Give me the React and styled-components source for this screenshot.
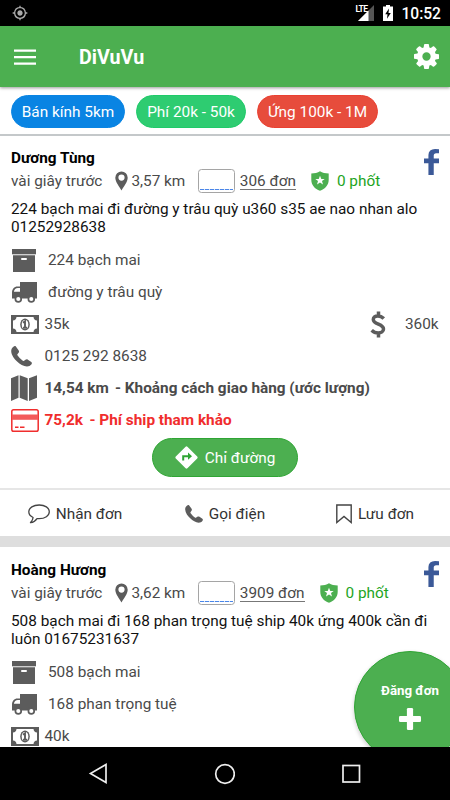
import React from 'react';
import styled, { createGlobalStyle, css } from 'styled-components';
import { MdGpsFixed } from 'react-icons/md';

const colors = {
  green: '#4caf50',
  edge: '#2fa534',
  grey: '#5c5c5c',
  text: '#4a4a4a',
  red: '#f02d2d',
};

const GlobalStyle = createGlobalStyle`
  * {
    box-sizing: border-box;
  }

  body {
    margin: 0;
    background: #fff;
    font-family: Roboto, 'Noto Sans', sans-serif;
    font-size: 15.35px;
    color: #111;
  }
`;

const Screen = styled.div`
  position: relative;
  display: flex;
  flex-direction: column;
  width: 450px;
  height: 800px;
  overflow: hidden;
  background: #fff;
`;

const StatusBar = styled.div`
  display: flex;
  align-items: center;
  flex: none;
  height: 26px;
  padding: 0 9px 0 12px;
  background: #000;
  color: #fff;
`;

const Clock = styled.span`
  margin-left: 8px;
  padding-top: 2px;
  font-size: 15.6px;
  font-weight: 500;
`;

const Spacer = styled.div`
  flex: 1;
`;

const Toolbar = styled.header`
  display: flex;
  align-items: center;
  flex: none;
  height: 61px;
  padding: 0 11px 0 14px;
  background: ${colors.green};
  box-shadow: 0 1px 3px rgba(0, 0, 0, 0.4);
  z-index: 1;
`;

const Title = styled.h1`
  margin: 2px 0 0 43px;
  font-size: 19.7px;
  font-weight: 700;
  color: #fff;
  flex: 1;
`;

const Filters = styled.div`
  display: flex;
  flex: none;
  gap: 11px;
  height: 49px;
  padding: 8px 11px 0;
  border-bottom: 2px solid #c4c8ca;
`;

const Chip = styled.span`
  display: flex;
  align-items: center;
  justify-content: center;
  width: ${({ w }) => `${w}px`};
  height: 32.5px;
  padding-top: 1px;
  border-radius: 17px;
  border: 1px solid ${({ edge }) => edge};
  background: ${({ bg }) => bg};
  color: #fff;
`;

const Feed = styled.main`
  flex: 1;
  min-height: 0;
  overflow: hidden;
`;

const Card = styled.article`
  padding-top: 11px;

  & + & {
    padding-top: 12px;
    border-top: 11px solid #dedede;
  }
`;

const CardBody = styled.div`
  padding: 0 11px;
`;

const CardHead = styled.div`
  display: flex;
  justify-content: space-between;

  > svg {
    margin-top: 2px;
  }
`;

const Name = styled.div`
  height: 22px;
  line-height: 22px;
  font-weight: 700;
  color: #000;
`;

const Meta = styled.div`
  display: flex;
  align-items: center;
  height: 23px;
  color: ${colors.text};
`;

const Distance = styled.span`
  display: flex;
  align-items: center;
  gap: 3px;
  margin: 0 13px;
`;

const Badge = styled.span`
  display: flex;
  align-items: flex-end;
  width: 37px;
  height: 24px;
  padding: 0 1px 2px;
  border: 1px solid #a5a5a5;
  border-radius: 3.5px;

  &::after {
    content: '';
    flex: 1;
    height: 1px;
    background: repeating-linear-gradient(90deg, #4a86e8 0 4px, #d5e3fa 4px 5px);
  }
`;

const Orders = styled.span`
  margin: 1px 15px 0 4.5px;
  line-height: 16px;
  border-bottom: 1px solid #777;
`;

const Reports = styled.span`
  margin-left: 8px;
  color: #1ea51e;
`;

const Description = styled.p`
  margin: 8px 0;
  line-height: 18px;
  color: #111;
`;

const Row = styled.div`
  display: flex;
  align-items: center;
  height: 32px;
  color: ${colors.text};

  ${({ strong }) =>
    strong &&
    css`
      font-weight: 700;
    `}

  ${({ red }) =>
    red &&
    css`
      color: ${colors.red};
    `}
`;

const IconSlot = styled.span`
  display: flex;
  align-items: center;
  width: ${({ wide }) => (wide ? '37px' : '33.5px')};
`;

const Lead = styled.span`
  width: ${({ w }) => `${w}px`};
`;

const Price = styled.span`
  width: 34px;
  margin-left: 19px;
`;

const RouteButton = styled.button`
  display: flex;
  align-items: center;
  justify-content: center;
  gap: 7px;
  width: 146px;
  height: 39px;
  margin: 2px auto 11px;
  padding: 0;
  border: 1px solid ${colors.edge};
  border-radius: 20px;
  background: ${colors.green};
  color: #fff;
  font: inherit;
`;

const Actions = styled.div`
  display: flex;
  height: 48px;
  border-top: 2px solid #e6e6e6;
`;

const Action = styled.div`
  display: flex;
  flex: 1;
  align-items: center;
  justify-content: center;
  gap: 6px;
  padding-top: 1px;
  color: #333;
`;

const PostButton = styled.div`
  position: absolute;
  left: 354px;
  top: 651px;
  display: flex;
  flex-direction: column;
  align-items: center;
  width: 112px;
  height: 112px;
  padding-top: 31px;
  border: 1px solid ${colors.edge};
  border-radius: 50%;
  background: ${colors.green};
  box-shadow: 0 2px 4px rgba(0, 0, 0, 0.2);
  color: #fff;
  font-size: 13.3px;
  font-weight: 700;

  svg {
    margin-top: 10px;
  }
`;

const NavBar = styled.nav`
  position: relative;
  display: flex;
  align-items: center;
  justify-content: space-between;
  flex: none;
  height: 53px;
  padding: 0 88px;
  background: #000;
  z-index: 1;
`;

const SignalIcon = () => (
  <svg width="20" height="18" viewBox="0 0 20 18">
    <path d="M19 1v16H3z" fill="#555" />
    <path d="M13.500 6.500V17H3z" fill="#fff" />
  </svg>
);

const Network = styled.span`
  align-self: flex-start;
  margin: 5px -12px 0 0;
  font-size: 8.5px;
  line-height: 8px;
  font-weight: 700;
  letter-spacing: -0.6px;
  z-index: 1;
`;

const BatteryIcon = () => (
  <svg width="18" height="16" viewBox="-8 0 18 16">
    <path d="M3 0h4v1.500h3V16H0V1.500h3z" fill="#fff" />
    <path d="M6 3.500 2.200 9.200h2.300L4 13.700l3.800-5.700H5.500z" fill="#000" />
  </svg>
);

const MenuIcon = () => (
  <svg width="22" height="16" viewBox="0 0 22 16">
    <path d="M0 1.700h22M0 8.200h22M0 14.700h22" stroke="#fff" strokeWidth="2.200" />
  </svg>
);

const GearIcon = () => (
  <svg width="25" height="25" viewBox="128 128 1536 1536" fill="#fff">
    <path d="M1152 896q0-106-75-181t-181-75-181 75-75 181 75 181 181 75 181-75 75-181zm512-109v222q0 12-8 23t-20 13l-185 28q-19 54-39 91 35 50 107 138 10 12 10 25t-9 23q-27 37-99 108t-94 71q-12 0-26-9l-138-108q-44 23-91 38-16 136-29 186-7 28-36 28h-222q-14 0-24.500-8.500t-11.500-21.500l-28-184q-49-16-90-37l-141 107q-10 9-25 9-14 0-25-11-126-114-165-168-7-10-7-23 0-12 8-23 15-21 51-66.500t54-70.500q-27-50-41-99l-183-27q-13-2-21-12.500t-8-23.500v-222q0-12 8-23t19-13l186-28q14-46 39-92-40-57-107-138-10-12-10-24 0-10 9-23 26-36 98.500-107.500t94.500-71.500q13 0 26 10l138 107q44-23 91-38 16-136 29-186 7-28 36-28h222q14 0 24.500 8.500t11.500 21.500l28 184q49 16 90 37l142-107q9-9 24-9 13 0 25 10 129 119 165 170 7 8 7 22 0 12-8 23-15 21-51 66.500t-54 70.500q26 50 41 98l183 28q13 2 21 12.500t8 23.500z" />
  </svg>
);

const FacebookIcon = () => (
  <svg width="15" height="26" viewBox="479 0 864 1664" preserveAspectRatio="none">
    <path
      fill="#3b5998"
      d="M1343 12v264h-157q-86 0-116 36t-30 108v189h303v296h-303v759h-306v-759h-255v-296h255v-218q0-186 104-288.500t277-102.500q147 0 228 12z"
    />
  </svg>
);

const PinIcon = () => (
  <svg width="13" height="20" viewBox="0 0 13 20">
    <path
      fill={colors.grey}
      fillRule="evenodd"
      d="M6.500 0.500A6.200 6.200 0 0 0 .3 6.700C.3 11 4.500 15.500 6.500 19.500 8.500 15.500 12.700 11 12.700 6.700A6.200 6.200 0 0 0 6.500.5zm0 3a3.100 3.100 0 1 1 0 6.200 3.100 3.100 0 0 1 0-6.200z"
    />
  </svg>
);

const ShieldIcon = () => (
  <svg width="18" height="20" viewBox="0 0 18 20">
    <path
      fill={colors.green}
      d="M9 .3C6.700 2 3.500 2.500.3 2.500v6.200c0 5.300 3.500 9.300 8.700 11 5.200-1.700 8.700-5.700 8.700-11V2.500C14.500 2.500 11.300 2 9 .3z"
    />
    <path
      fill="#fff"
      d="m9 4.700 1.300 3.200h3.400l-2.700 2.200 1 3.400L9 11.500l-3 2 1-3.400-2.700-2.200h3.400z"
    />
  </svg>
);

const BoxIcon = () => (
  <svg width="26" height="23" viewBox="0 0 26 23" fill={colors.grey}>
    <path d="M1 0h24v5.300H1z" />
    <path
      fillRule="evenodd"
      d="M2 6.300h22V23H2zM11 9a.8.8 0 0 0 0 2h4a.8.8 0 0 0 0-2z"
    />
  </svg>
);

const TruckIcon = () => (
  <svg width="26" height="21" viewBox="0 0 26 21">
    <path
      fill={colors.grey}
      fillRule="evenodd"
      d="M9 0h17v16.500H1V11c0-4 2.200-6.500 5.500-6.500H9zM9 6H7C4.600 6 3.300 7.500 2.900 9.700H9z"
    />
    <g fill="#fff" stroke={colors.grey} strokeWidth="1.700">
      <circle cx="7.300" cy="17" r="2.900" />
      <circle cx="20.300" cy="17" r="2.900" />
    </g>
  </svg>
);

const MoneyIcon = () => (
  <svg width="28" height="19" viewBox="0 0 28 19">
    <path
      fill={colors.grey}
      fillRule="evenodd"
      d="M0 0h28v19H0zM5.500 2A4 4 0 0 1 2 5.500v8A4 4 0 0 1 5.500 17h17a4 4 0 0 1 3.500-3.500v-8A4 4 0 0 1 22.500 2z"
    />
    <ellipse cx="14" cy="9.500" rx="4.800" ry="6" fill={colors.grey} />
    <ellipse cx="14" cy="9.500" rx="3.300" ry="4.600" fill="#fff" />
    <path
      d="M12 7.800 14 6.300v6.200M12 12.700h4.200"
      fill="none"
      stroke={colors.grey}
      strokeWidth="1.900"
    />
  </svg>
);

const PhoneIcon = ({ size = 21 }) => (
  <svg width={size} height={size} viewBox="0 0 21 21">
    <path
      fill={colors.grey}
      d="M4.700.3C3.900-.1 3 .2 2.200.9.900 2 .2 3.200.2 5.200c.2 4 3.200 7.800 5.900 10.400 2.900 2.700 6.300 4.900 9.900 5 2 0 3.200-.8 4.300-2 .7-.9.800-1.900 0-2.500l-3.400-2.400c-.9-.6-1.700-.5-2.500.1l-1.300.9c-.6.400-1 .3-1.600-.1a22 22 0 0 1-4.900-5c-.4-.6-.4-1 0-1.500l1-1.300c.5-.7.600-1.500.1-2.300z"
    />
  </svg>
);

const MapIcon = () => (
  <svg width="26" height="26" viewBox="0 0 26 26" fill={colors.grey}>
    <path d="M0 3.200 7.500.3v22.500L0 26zM8.700.3l8 2.900V26l-8-3.200zM18 3.200 26 .3v22.500L18 26z" />
  </svg>
);

const CreditIcon = () => (
  <svg width="28" height="23" viewBox="0 0 28 23">
    <rect
      x=".8"
      y=".8"
      width="26.400"
      height="21.400"
      rx="1.800"
      fill="none"
      stroke={colors.red}
      strokeWidth="1.500"
    />
    <path d="M1 5.500h26v5.300H1z" fill="#f35a5a" />
    <path d="M4 18.200h3.500M9 18.200h4.500" stroke={colors.red} strokeWidth="1.600" />
  </svg>
);

const DollarIcon = () => (
  <svg width="16" height="27" viewBox="0 0 16 27">
    <path
      fill="none"
      stroke={colors.grey}
      strokeWidth="3.500"
      d="M13.800 7.600C12.200 6 10 5 7.800 5 5 5 3.300 6.400 3.300 8.500c0 5.200 10.200 4.200 10.200 9.500 0 2.500-2.300 4-5.300 4-2.700 0-4.800-1-6.500-2.700M8.500 .5v4M8.500 22.500v4"
    />
  </svg>
);

const DirectionsIcon = () => (
  <svg width="23" height="23" viewBox="0 0 23 23">
    <path
      fill="#fff"
      d="M10.600.8.8 10.600a1.300 1.300 0 0 0 0 1.800l9.800 9.800a1.300 1.300 0 0 0 1.800 0l9.800-9.800a1.300 1.300 0 0 0 0-1.800L12.400.8a1.300 1.300 0 0 0-1.800 0z"
    />
    <path d="M8.200 14.500V10.200h6.500" fill="none" stroke={colors.edge} strokeWidth="2" />
    <path d="M13 6.600 17 10.200l-4 3.600z" fill={colors.edge} />
  </svg>
);

const ChatIcon = () => (
  <svg width="22" height="20" viewBox="0 0 22 20">
    <path
      fill="none"
      stroke="#444"
      strokeWidth="1.300"
      strokeLinejoin="round"
      d="M11.200 1C5.400 1 .8 3.800.8 7.800c0 2.500 1.700 4.500 4.300 5.700-.1 2-1.200 3.500-2.600 5.200 2.900-.4 4.900-1.700 6.500-4.100.8.1 1.500.1 2.200.1 5.700 0 10.100-2.900 10.100-6.900S16.900 1 11.200 1z"
    />
  </svg>
);

const BookmarkIcon = () => (
  <svg width="16" height="20" viewBox="0 0 16 20">
    <path
      d="M.8 1h14.400v17.500L8 12.500.8 18.500z"
      fill="none"
      stroke="#444"
      strokeWidth="1.400"
    />
  </svg>
);

const PlusIcon = () => (
  <svg width="22" height="22" viewBox="0 0 22 22" fill="#fff">
    <rect x="7.900" y="0" width="6.200" height="22" rx="1.300" />
    <rect x="0" y="7.900" width="22" height="6.200" rx="1.300" />
  </svg>
);

const orders = [
  {
    name: 'Dương Tùng',
    distance: '3,57 km',
    count: '306 đơn',
    text: ['224 bạch mai đi đường y trâu quỳ u360 s35 ae nao nhan alo', '01252928638'],
    from: '224 bạch mai',
    to: 'đường y trâu quỳ',
    fee: '35k',
    deposit: '360k',
    phone: '0125 292 8638',
    route: '14,54 km',
    ship: '75,2k',
  },
  {
    name: 'Hoàng Hương',
    distance: '3,62 km',
    count: '3909 đơn',
    text: ['508 bạch mai đi 168 phan trọng tuệ ship 40k ứng 400k cần đi', 'luôn 01675231637'],
    from: '508 bạch mai',
    to: '168 phan trọng tuệ',
    fee: '40k',
  },
];

const OrderCard = ({ order }) => (
  <Card>
    <CardBody>
      <CardHead>
        <div>
          <Name>{order.name}</Name>
          <Meta>
            vài giây trước
            <Distance>
              <PinIcon />
              {order.distance}
            </Distance>
            <Badge />
            <Orders>{order.count}</Orders>
            <ShieldIcon />
            <Reports>0 phốt</Reports>
          </Meta>
        </div>
        <FacebookIcon />
      </CardHead>
      <Description>
        {order.text[0]}
        <br />
        {order.text[1]}
      </Description>
      <Row>
        <IconSlot wide>
          <BoxIcon />
        </IconSlot>
        {order.from}
      </Row>
      <Row>
        <IconSlot wide>
          <TruckIcon />
        </IconSlot>
        {order.to}
      </Row>
      <Row>
        <IconSlot>
          <MoneyIcon />
        </IconSlot>
        {order.fee}
        {order.deposit && (
          <>
            <Spacer />
            <DollarIcon />
            <Price>{order.deposit}</Price>
          </>
        )}
      </Row>
      {order.phone && (
        <>
          <Row>
            <IconSlot>
              <PhoneIcon />
            </IconSlot>
            {order.phone}
          </Row>
          <Row strong>
            <IconSlot>
              <MapIcon />
            </IconSlot>
            <Lead w={70.5}>{order.route}</Lead>- Khoảng cách giao hàng (ước lượng)
          </Row>
          <Row strong red>
            <IconSlot>
              <CreditIcon />
            </IconSlot>
            <Lead w={45}>{order.ship}</Lead>- Phí ship tham khảo
          </Row>
          <RouteButton>
            <DirectionsIcon />
            Chỉ đường
          </RouteButton>
        </>
      )}
    </CardBody>
    {order.phone && (
      <Actions>
        <Action>
          <ChatIcon />
          Nhận đơn
        </Action>
        <Action>
          <PhoneIcon size={18} />
          Gọi điện
        </Action>
        <Action>
          <BookmarkIcon />
          Lưu đơn
        </Action>
      </Actions>
    )}
  </Card>
);

const App = () => (
  <Screen>
    <GlobalStyle />
    <StatusBar>
      <MdGpsFixed size={16} color="#aaa" />
      <Spacer />
      <Network>LTE</Network>
      <SignalIcon />
      <BatteryIcon />
      <Clock>10:52</Clock>
    </StatusBar>
    <Toolbar>
      <MenuIcon />
      <Title>DiVuVu</Title>
      <GearIcon />
    </Toolbar>
    <Filters>
      <Chip w={114} bg="#0984e3" edge="#0984e3">
        Bán kính 5km
      </Chip>
      <Chip w={110} bg="#2ecc71" edge="#1fca69">
        Phí 20k - 50k
      </Chip>
      <Chip w={121} bg="#e74c3c" edge="#ea4031">
        Ứng 100k - 1M
      </Chip>
    </Filters>
    <Feed>
      {orders.map(order => (
        <OrderCard key={order.name} order={order} />
      ))}
    </Feed>
    <PostButton>
      Đăng đơn
      <PlusIcon />
    </PostButton>
    <NavBar>
      <svg width="20" height="22" viewBox="0 0 20 22">
        <path d="M18 1.500v18L2.500 10.500z" fill="none" stroke="#eee" strokeWidth="1.700" />
      </svg>
      <svg width="22" height="22" viewBox="0 0 22 22">
        <circle cx="12" cy="11" r="9.300" fill="none" stroke="#eee" strokeWidth="1.700" />
      </svg>
      <svg width="22" height="22" viewBox="0 0 22 22">
        <rect x="3" y="2.500" width="16.500" height="16.500" fill="none" stroke="#eee" strokeWidth="1.700" />
      </svg>
    </NavBar>
  </Screen>
);

export default App;
